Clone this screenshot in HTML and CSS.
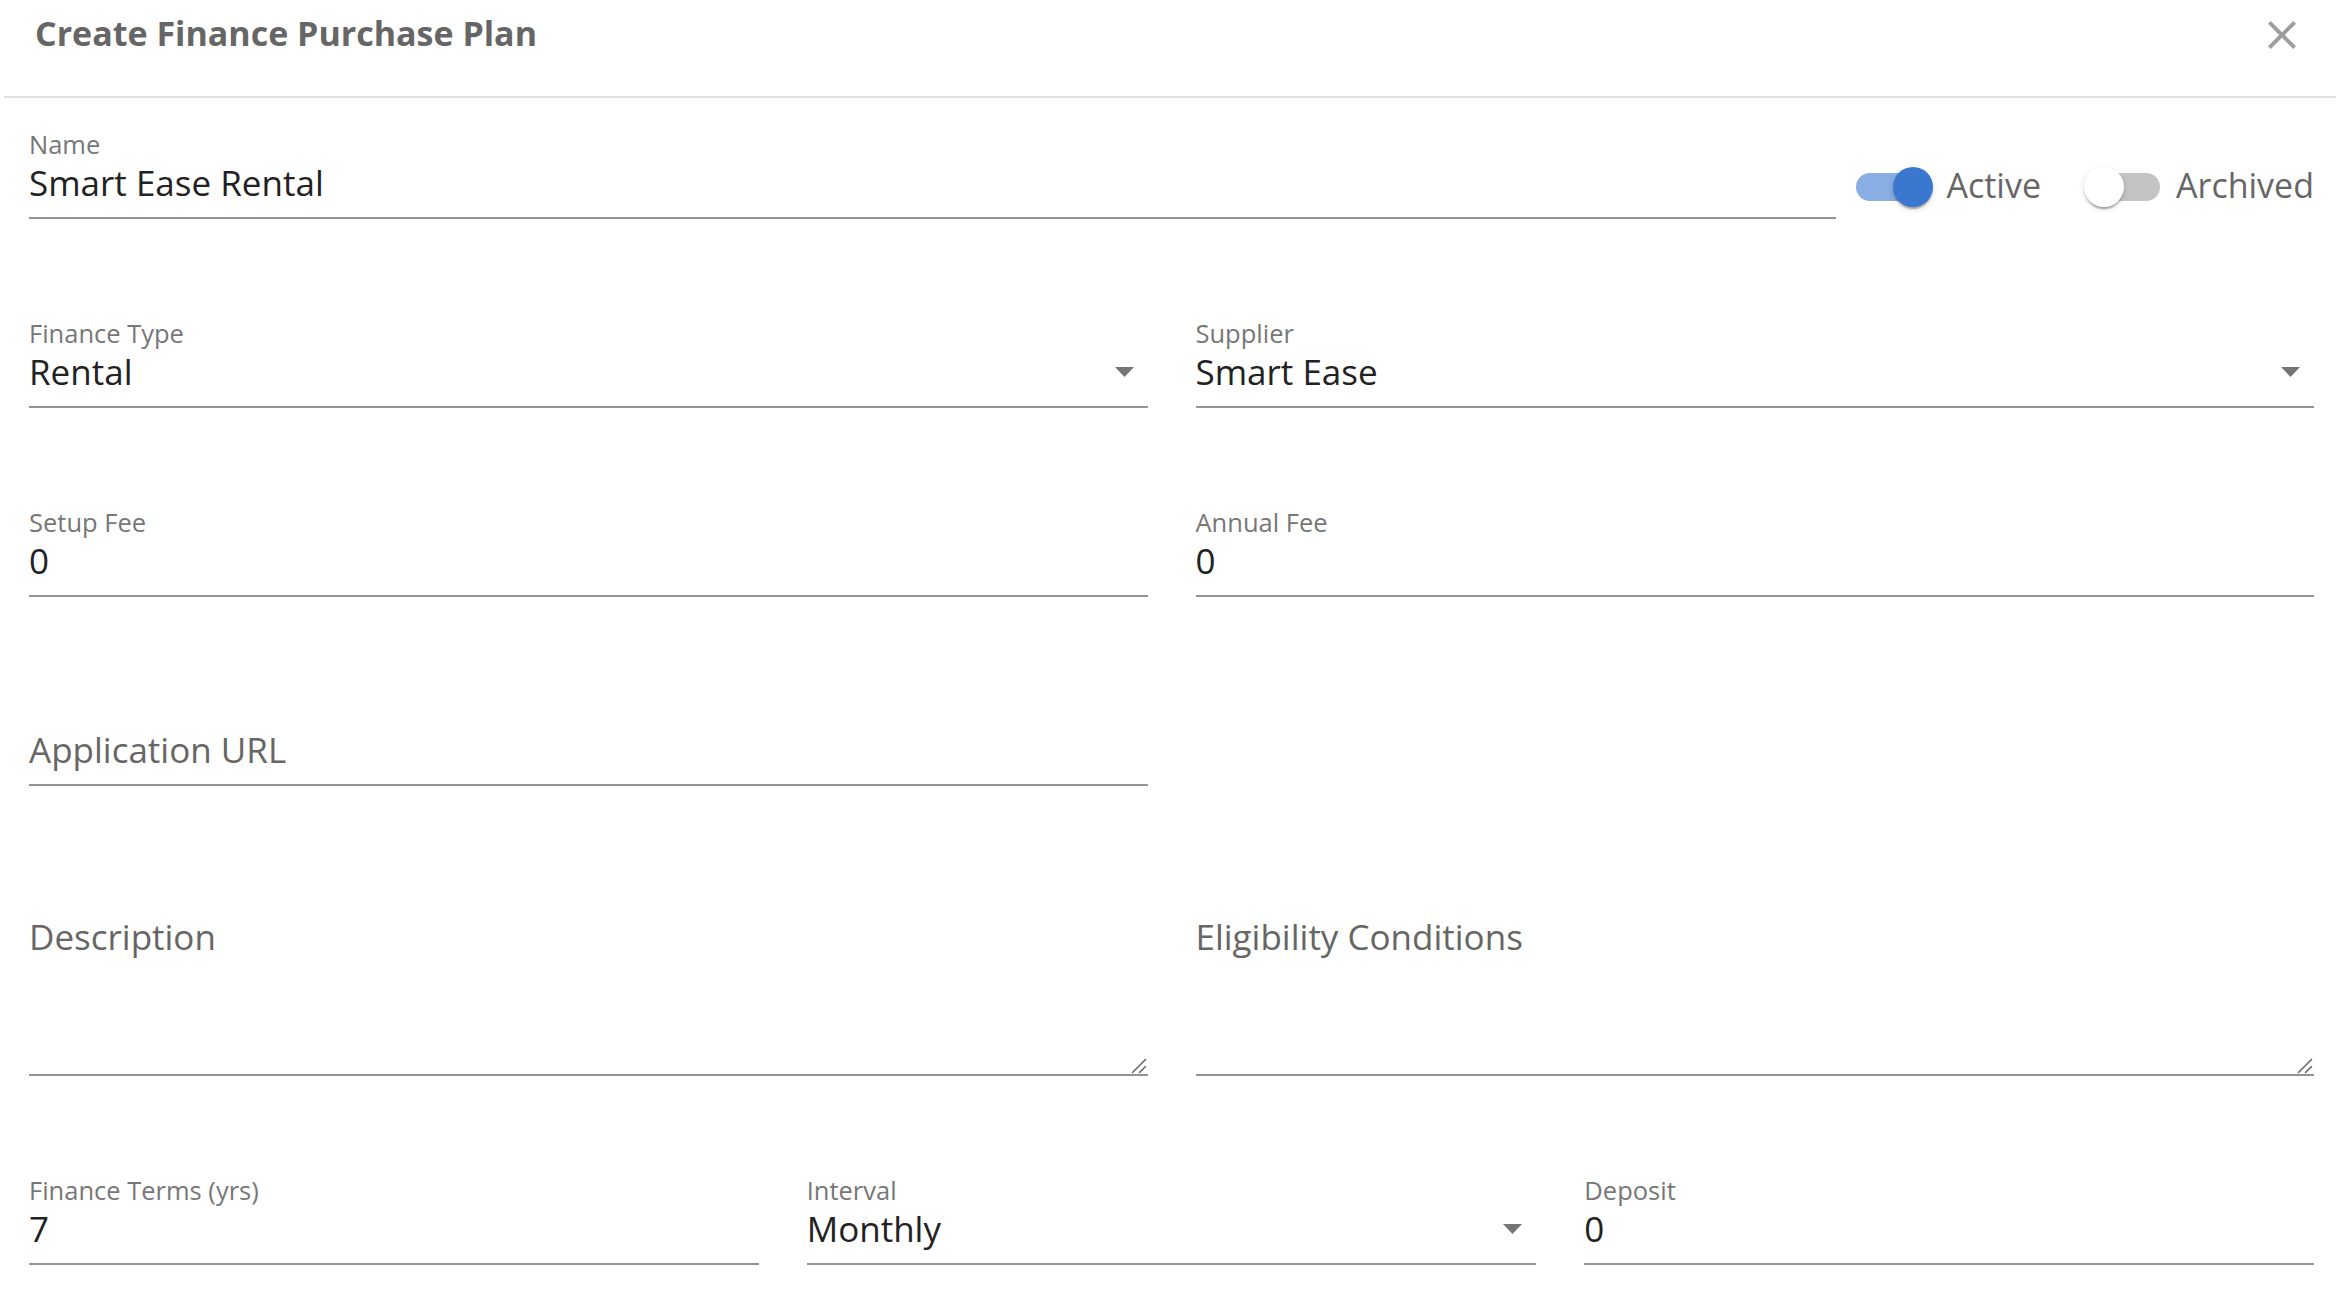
FILE: index.html
```html
<!DOCTYPE html>
<html lang="en">
<head>
<meta charset="utf-8">
<title>Create Finance Purchase Plan</title>
<link rel="stylesheet" href="styles.css">
</head>
<body>
<div class="dialog">
  <header class="dialog-header">
    <h2 class="dialog-title">Create Finance Purchase Plan</h2>
    <button class="close-btn" type="button" aria-label="Close">
      <svg viewBox="5 5 14 14" width="28" height="28"><path d="M19 6.41 17.59 5 12 10.59 6.41 5 5 6.41 10.59 12 5 17.59 6.41 19 12 13.41 17.59 19 19 17.59 13.41 12z" fill="#9e9e9e"/></svg>
    </button>
  </header>
  <main class="dialog-body">
    <div class="row row-name">
      <div class="field field-grow">
        <div class="field-label">Name</div>
        <div class="field-control"><span class="field-value">Smart Ease Rental</span></div>
      </div>
      <div class="toggles">
        <label class="toggle toggle-on">
          <span class="switch"><span class="switch-track"></span><span class="switch-thumb"></span></span>
          <span class="toggle-text">Active</span>
        </label>
        <label class="toggle toggle-off">
          <span class="switch"><span class="switch-track"></span><span class="switch-thumb"></span></span>
          <span class="toggle-text">Archived</span>
        </label>
      </div>
    </div>

    <div class="row grid-2">
      <div class="field">
        <div class="field-label">Finance Type</div>
        <div class="field-control"><span class="field-value">Rental</span><svg class="select-arrow" viewBox="0 0 19 10" width="19" height="10"><polygon points="0,0 19,0 9.5,10" fill="#757575"/></svg></div>
      </div>
      <div class="field">
        <div class="field-label">Supplier</div>
        <div class="field-control"><span class="field-value">Smart Ease</span><svg class="select-arrow" viewBox="0 0 19 10" width="19" height="10"><polygon points="0,0 19,0 9.5,10" fill="#757575"/></svg></div>
      </div>
    </div>

    <div class="row grid-2">
      <div class="field">
        <div class="field-label">Setup Fee</div>
        <div class="field-control"><span class="field-value">0</span></div>
      </div>
      <div class="field">
        <div class="field-label">Annual Fee</div>
        <div class="field-control"><span class="field-value">0</span></div>
      </div>
    </div>

    <div class="row grid-2">
      <div class="field">
        <div class="field-label"></div>
        <div class="field-control"><span class="field-value placeholder">Application URL</span></div>
      </div>
    </div>

    <div class="row grid-2">
      <div class="field">
        <div class="field-label"></div>
        <div class="field-control multi">
          <span class="field-value placeholder">Description</span>
          <div class="area"><svg class="resize-handle" viewBox="0 0 16 16" width="16" height="16"><path d="M14.5 1.5 1.5 14.5M14.5 8.5 8.5 14.5" stroke="#6a6a6a" stroke-width="1.6" stroke-linecap="round" fill="none"/></svg></div>
        </div>
      </div>
      <div class="field">
        <div class="field-label"></div>
        <div class="field-control multi">
          <span class="field-value placeholder">Eligibility Conditions</span>
          <div class="area"><svg class="resize-handle" viewBox="0 0 16 16" width="16" height="16"><path d="M14.5 1.5 1.5 14.5M14.5 8.5 8.5 14.5" stroke="#6a6a6a" stroke-width="1.6" stroke-linecap="round" fill="none"/></svg></div>
        </div>
      </div>
    </div>

    <div class="row grid-3">
      <div class="field">
        <div class="field-label">Finance Terms (yrs)</div>
        <div class="field-control"><span class="field-value">7</span></div>
      </div>
      <div class="field">
        <div class="field-label">Interval</div>
        <div class="field-control"><span class="field-value">Monthly</span><svg class="select-arrow" viewBox="0 0 19 10" width="19" height="10"><polygon points="0,0 19,0 9.5,10" fill="#757575"/></svg></div>
      </div>
      <div class="field">
        <div class="field-label">Deposit</div>
        <div class="field-control"><span class="field-value">0</span></div>
      </div>
    </div>
  </main>
</div>
</body>
</html>
```
FILE: styles.css
```css
* { box-sizing: border-box; }

html, body {
  margin: 0;
  padding: 0;
  background: #ffffff;
}

body {
  font-family: "Open Sans", "Noto Sans", "Liberation Sans", sans-serif;
  color: #222222;
}

.dialog {
  width: 2336px;
  min-height: 1312px;
  background: #ffffff;
}

.dialog-header {
  margin-left: 4px;
  height: 98px;
  border-bottom: 2px solid #e0e0e0;
  display: flex;
  justify-content: space-between;
  align-items: flex-start;
}

.dialog-title {
  margin: 0;
  padding: 10px 0 0 31px;
  font-size: 34px;
  line-height: 46px;
  font-weight: 700;
  color: #666666;
}

.close-btn {
  margin: 21px 40px 0 0;
  padding: 0;
  border: 0;
  background: none;
  width: 28px;
  height: 28px;
  display: block;
}

.close-btn svg { display: block; }

.dialog-body {
  padding: 31px 22px 0 29px;
  display: flex;
  flex-direction: column;
  gap: 99px;
}

.row-name {
  display: flex;
  align-items: flex-end;
}

.grid-2 {
  display: grid;
  grid-template-columns: 1fr 1fr;
  column-gap: 48px;
}

.grid-3 {
  display: grid;
  grid-template-columns: 1fr 1fr 1fr;
  column-gap: 48px;
}

.field {
  display: flex;
  flex-direction: column;
  min-width: 0;
}

.field-grow { flex: 1; }

.field-label {
  height: 30px;
  font-size: 25.5px;
  line-height: 30px;
  color: #777777;
  white-space: nowrap;
}

.field-control {
  display: flex;
  align-items: center;
  padding: 2px 0 12px;
  border-bottom: 2px solid #949494;
}

.field-value {
  flex: 1;
  font-size: 35px;
  line-height: 44px;
  color: #222222;
  white-space: nowrap;
}

.placeholder { color: #666666; }

.select-arrow {
  display: block;
  flex: none;
  margin-right: 14px;
}

.field-control.multi {
  flex-direction: column;
  align-items: stretch;
  padding: 0;
  border-bottom: 0;
}

.field-control.multi .field-value { flex: none; }

.area {
  height: 117px;
  border-bottom: 2px solid #949494;
  display: flex;
  justify-content: flex-end;
  align-items: flex-end;
}

.resize-handle {
  display: block;
  margin: 0 1px 0 0;
}

/* toggles */
.toggles {
  display: flex;
  align-items: center;
  margin-left: 20px;
  margin-bottom: 8px;
}

.toggle {
  display: flex;
  align-items: center;
}

.toggle-off { margin-left: 43px; }

.switch {
  position: relative;
  display: block;
  width: 77px;
  height: 40px;
  flex: none;
}

.switch-track {
  position: absolute;
  top: 6px;
  width: 73px;
  height: 28px;
  border-radius: 14px;
}

.switch-thumb {
  position: absolute;
  top: 0;
  width: 40px;
  height: 40px;
  border-radius: 50%;
  box-shadow: 0 4px 2px -2px rgba(0,0,0,0.2), 0 2px 2px 0 rgba(0,0,0,0.14), 0 2px 6px 0 rgba(0,0,0,0.12);
}

.toggle-on .switch-track { left: 0; background: #88aee3; }
.toggle-on .switch-thumb { left: 37px; background: #3a77cf; }
.toggle-on .toggle-text { margin-left: 13px; }

.toggle-off .switch { width: 76px; }
.toggle-off .switch-track { left: 3px; background: #c4c4c4; }
.toggle-off .switch-thumb { left: 0; background: #ffffff; }
.toggle-off .toggle-text { margin-left: 16px; }

.toggle-text {
  font-size: 34px;
  line-height: 44px;
  color: #666666;
  margin-bottom: 4px;
  white-space: nowrap;
}
```
